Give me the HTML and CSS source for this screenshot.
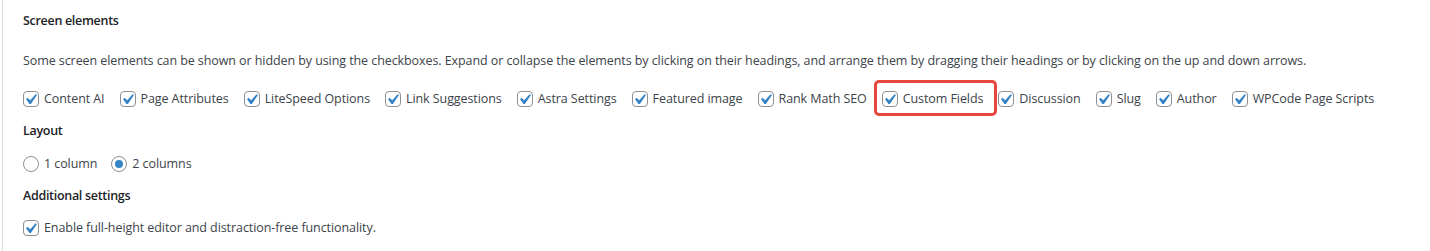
FILE: index.html
```html
<!DOCTYPE html>
<html>
    <head>
        <title>Screen Options</title>
        <link rel="stylesheet" href="styles.css">
    </head>
    <body>
        <div class="screen_wrap">
            <fieldset class="prefs_box">
                <h5 class="prefs_title">Screen elements</h5>
                <p class="prefs_desc">Some screen elements can be shown or hidden by using the checkboxes. Expand or collapse the elements by clicking on their headings, and arrange them by dragging their headings or by clicking on the up and down arrows.</p>
                <div class="prefs_row">
                    <label class="pref_item"><span class="cb"><svg viewBox="0 0 20 20"><path d="M14.83 4.89l1.34.94-5.81 8.38H9.02L5.78 9.67l1.34-1.25 2.57 2.4z"/></svg></span>Content AI</label>
                    <label class="pref_item"><span class="cb"><svg viewBox="0 0 20 20"><path d="M14.83 4.89l1.34.94-5.81 8.38H9.02L5.78 9.67l1.34-1.25 2.57 2.4z"/></svg></span>Page Attributes</label>
                    <label class="pref_item"><span class="cb"><svg viewBox="0 0 20 20"><path d="M14.83 4.89l1.34.94-5.81 8.38H9.02L5.78 9.67l1.34-1.25 2.57 2.4z"/></svg></span>LiteSpeed Options</label>
                    <label class="pref_item"><span class="cb"><svg viewBox="0 0 20 20"><path d="M14.83 4.89l1.34.94-5.81 8.38H9.02L5.78 9.67l1.34-1.25 2.57 2.4z"/></svg></span>Link Suggestions</label>
                    <label class="pref_item"><span class="cb"><svg viewBox="0 0 20 20"><path d="M14.83 4.89l1.34.94-5.81 8.38H9.02L5.78 9.67l1.34-1.25 2.57 2.4z"/></svg></span>Astra Settings</label>
                    <label class="pref_item"><span class="cb"><svg viewBox="0 0 20 20"><path d="M14.83 4.89l1.34.94-5.81 8.38H9.02L5.78 9.67l1.34-1.25 2.57 2.4z"/></svg></span>Featured image</label>
                    <label class="pref_item"><span class="cb"><svg viewBox="0 0 20 20"><path d="M14.83 4.89l1.34.94-5.81 8.38H9.02L5.78 9.67l1.34-1.25 2.57 2.4z"/></svg></span>Rank Math SEO</label>
                    <label class="pref_item pref_mark"><span class="cb"><svg viewBox="0 0 20 20"><path d="M14.83 4.89l1.34.94-5.81 8.38H9.02L5.78 9.67l1.34-1.25 2.57 2.4z"/></svg></span>Custom Fields</label>
                    <label class="pref_item"><span class="cb"><svg viewBox="0 0 20 20"><path d="M14.83 4.89l1.34.94-5.81 8.38H9.02L5.78 9.67l1.34-1.25 2.57 2.4z"/></svg></span>Discussion</label>
                    <label class="pref_item"><span class="cb"><svg viewBox="0 0 20 20"><path d="M14.83 4.89l1.34.94-5.81 8.38H9.02L5.78 9.67l1.34-1.25 2.57 2.4z"/></svg></span>Slug</label>
                    <label class="pref_item"><span class="cb"><svg viewBox="0 0 20 20"><path d="M14.83 4.89l1.34.94-5.81 8.38H9.02L5.78 9.67l1.34-1.25 2.57 2.4z"/></svg></span>Author</label>
                    <label class="pref_item"><span class="cb"><svg viewBox="0 0 20 20"><path d="M14.83 4.89l1.34.94-5.81 8.38H9.02L5.78 9.67l1.34-1.25 2.57 2.4z"/></svg></span>WPCode Page Scripts</label>
                </div>
            </fieldset>
            <fieldset class="prefs_box">
                <h5 class="prefs_title title_layout">Layout</h5>
                <div class="radio_row">
                    <label class="radio_item"><span class="rb"></span>1 column</label>
                    <label class="radio_item"><span class="rb rb_on"></span>2 columns</label>
                </div>
            </fieldset>
            <fieldset class="prefs_box">
                <h5 class="prefs_title title_extra">Additional settings</h5>
                <div class="extra_row">
                    <label class="pref_item"><span class="cb"><svg viewBox="0 0 20 20"><path d="M14.83 4.89l1.34.94-5.81 8.38H9.02L5.78 9.67l1.34-1.25 2.57 2.4z"/></svg></span>Enable full-height editor and distraction-free functionality.</label>
                </div>
            </fieldset>
        </div>
    </body>
</html>
```

FILE: styles.css
```css
html, body{
    margin: 0;
    background: #fff;
}
body{
    font-family: "Open Sans", "Noto Sans", sans-serif;
    font-size: 12.5px;
    letter-spacing: -0.08px;
    color: #3c434a;
}
.screen_wrap{
    margin-left: 2px;
    border-left: 1px solid #dcdcde;
    padding-left: 20px;
    padding-top: 1px;
    height: 251px;
    box-sizing: border-box;
}
.prefs_box{
    border: 0;
    margin: 0;
    padding: 0;
}
.prefs_title{
    margin: 10px 0 0;
    font-size: 12.5px;
    font-weight: 600;
    letter-spacing: -0.3px;
    line-height: 20px;
    color: #1d2327;
}
.prefs_desc{
    margin: 20px 0 0;
    line-height: 20px;
}
.prefs_row{
    display: flex;
    flex-wrap: nowrap;
    margin-top: 11px;
    height: 34px;
    align-items: center;
    white-space: nowrap;
}
.pref_item{
    display: inline-flex;
    align-items: center;
    padding-right: 15px;
    line-height: 20px;
    position: relative;
}
.cb{
    display: inline-block;
    width: 16px;
    height: 16px;
    box-sizing: border-box;
    border: 1px solid #8c8f94;
    border-radius: 4px;
    margin-right: 5px;
    background: #fff;
    flex: none;
}
.cb svg{
    display: block;
    width: 21px;
    height: 21px;
    margin: -3px 0 0 -4px;
    fill: #3582c4;
}
/* red annotation frame around one option */
.pref_mark::after{
    content: "";
    position: absolute;
    left: -8px;
    right: 1px;
    top: -9px;
    bottom: -7px;
    border: 3px solid #e8453c;
    border-radius: 5px;
}
.title_layout{
    margin-top: 5px;
}
.radio_row{
    display: flex;
    margin-top: 13px;
    height: 20px;
    align-items: center;
}
.radio_item{
    display: inline-flex;
    align-items: center;
    padding-right: 14px;
    line-height: 20px;
}
.rb{
    display: inline-block;
    width: 16px;
    height: 16px;
    box-sizing: border-box;
    border: 1px solid #8c8f94;
    border-radius: 50%;
    margin-right: 5px;
    position: relative;
    flex: none;
}
.rb_on::before{
    content: "";
    position: absolute;
    left: 3px;
    top: 3px;
    width: 8px;
    height: 8px;
    border-radius: 50%;
    background: #3582c4;
}
.title_extra{
    margin-top: 12px;
}
.extra_row{
    display: flex;
    margin-top: 12px;
    height: 20px;
    align-items: center;
}
```
